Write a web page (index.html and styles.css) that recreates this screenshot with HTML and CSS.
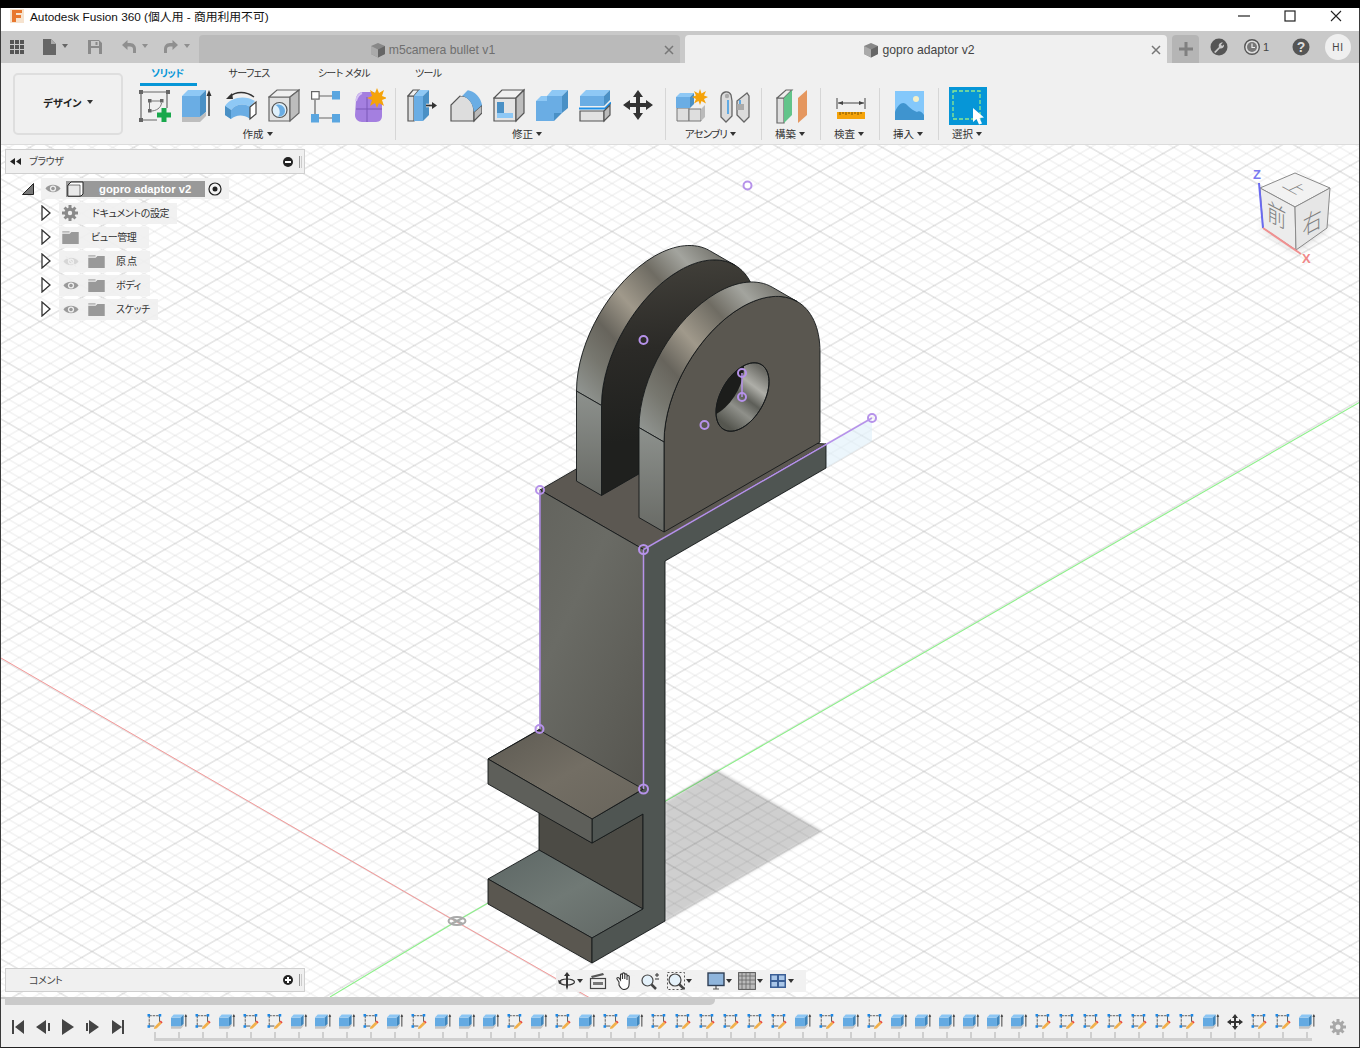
FILE: index.html
```html
<!DOCTYPE html>
<html lang="ja">
<head>
<meta charset="utf-8">
<title>Autodesk Fusion 360</title>
<link rel="stylesheet" href="styles.css">
</head>
<body>
<svg class="defs" width="0" height="0">
  <defs>
    <symbol id="s" viewBox="0 0 18 18">
      <g transform="translate(1.500 1) scale(.86)">
      <path d="M2 2H14M2 2V14" stroke="#555" stroke-width="1.100" stroke-dasharray="3 1" fill="none"/>
      <path d="M14 2V9M2 14H8" stroke="#555" stroke-width="1.100" fill="none"/>
      <rect x="0" y="0" width="3" height="3" fill="#1e88e5"/><rect x="13" y="0" width="3" height="3" fill="#1e88e5"/><rect x="0" y="13" width="3" height="3" fill="#1e88e5"/>
      <path d="M8 15L14 9L16.500 11L10.500 17L7.500 17.500Z" fill="#f2b04a"/>
      <path d="M14 9L15.500 7.500L17.500 9.500L16.500 11Z" fill="#e8483f"/>
      </g>
    </symbol>
    <symbol id="e" viewBox="0 0 18 18">
      <g transform="translate(1 1) scale(.9)">
      <path d="M0 4H11V14H0Z" fill="#64aae2"/><path d="M0 4L3 0.500H14L11 4Z" fill="#8cc6f4"/><path d="M11 4L14 0.500V11L11 14Z" fill="#3f86bd"/>
      <path d="M0 14H11L14 11V13L11 16.500H0Z" fill="#c4c4c4"/>
      <path d="M16.500 14V2" stroke="#333" stroke-width="1"/><path d="M16.500 0L15 3H18Z" fill="#333"/>
      </g>
    </symbol>
    <symbol id="m" viewBox="0 0 18 18">
      <path d="M9 1L12 5H10V8H13V6L17 9L13 12V10H10V13H12L9 17L6 13H8V10H5V12L1 9L5 6V8H8V5H6Z" fill="#333"/>
    </symbol>
    <symbol id="eye" viewBox="0 0 18 12">
      <path d="M0.500 6C4 0.500 14 0.500 17.500 6C14 11.500 4 11.500 0.500 6Z" fill="#999"/>
      <circle cx="9" cy="6" r="3.500" fill="#eee"/><circle cx="9" cy="6" r="2" fill="#999"/>
    </symbol>
    <symbol id="folder" viewBox="0 0 18 14">
      <path d="M0 0H8V2H0Z" fill="#bbb"/><path d="M10 1H18V14H0V3H8Z" fill="#999"/>
    </symbol>
    <symbol id="exp" viewBox="0 0 10 16">
      <path d="M1 1L9 8L1 15Z" fill="#fff" stroke="#333" stroke-width="1.300"/>
    </symbol>
    <symbol id="gcube" viewBox="0 0 16 16">
      <path d="M1 4L8 1L15 4V12L8 15.500L1 12Z" fill="#888"/><path d="M8 7.500L15 4V12L8 15.500Z" fill="#666"/><path d="M1 4L8 7.500V15.500L1 12Z" fill="#aaa"/>
    </symbol>
  </defs>
</svg>

<div class="app">
  <div class="blackbar"></div>

  <header class="titlebar">
    <svg class="ficon" viewBox="0 0 14 14"><rect width="14" height="14" fill="#f6e3cf"/><path d="M2 1H12V4H6V6H11V9H6V13H2Z" fill="#e8772e"/></svg>
    <span class="apptitle">Autodesk Fusion 360 (個人用 - 商用利用不可)</span>
    <div class="winbtns">
      <svg class="winbtn" viewBox="0 0 12 12"><path d="M0 6H12" stroke="#222" stroke-width="1.200"/></svg>
      <svg class="winbtn" viewBox="0 0 12 12"><rect x="1" y="1" width="10" height="10" fill="none" stroke="#222" stroke-width="1.200"/></svg>
      <svg class="winbtn" viewBox="0 0 12 12"><path d="M1 1L11 11M11 1L1 11" stroke="#222" stroke-width="1.100"/></svg>
    </div>
  </header>

  <div class="tabbar">
    <div class="quick">
      <svg class="q14" viewBox="0 0 14 14"><g fill="#555"><rect width="4" height="4"/><rect x="5" width="4" height="4"/><rect x="10" width="4" height="4"/><rect y="5" width="4" height="4"/><rect x="5" y="5" width="4" height="4"/><rect x="10" y="5" width="4" height="4"/><rect y="10" width="4" height="4"/><rect x="5" y="10" width="4" height="4"/><rect x="10" y="10" width="4" height="4"/></g></svg>
      <svg class="q26" viewBox="0 0 26 16"><path d="M0 0H8L13 5V16H0Z" fill="#666"/><path d="M8 0L13 5H8Z" fill="#aaa"/><path d="M19 5H25L22 9Z" fill="#666"/></svg>
      <svg class="q14" viewBox="0 0 14 14"><path d="M0 0H11L14 3V14H0ZM3 1V6H11V1ZM3 8V14H11V8Z" fill="#8a8a8a" fill-rule="evenodd"/><rect x="7.500" y="2" width="2" height="3" fill="#8a8a8a"/></svg>
      <svg class="q30" viewBox="0 0 30 16"><path d="M1 6L6.500 1V4H9C13 4 15 7 15 10V14H12V10C12 8.500 11 7.500 9 7.500H6.500V11Z" fill="#8f8f8f"/><path d="M21 5H27L24 9Z" fill="#8f8f8f"/></svg>
      <svg class="q30 redo" viewBox="0 0 30 16"><path d="M15 6L9.500 1V4H7C3 4 1 7 1 10V14H4V10C4 8.500 5 7.500 7 7.500H9.500V11Z" fill="#8f8f8f"/><path d="M21 5H27L24 9Z" fill="#8f8f8f"/></svg>
    </div>
    <div class="doctab inactive">
      <svg class="tabcube" viewBox="0 0 16 16"><use href="#gcube"/></svg>
      <span class="tabname">m5camera bullet v1</span>
      <svg class="tabx" viewBox="0 0 10 10"><path d="M1 1L9 9M9 1L1 9" stroke="currentColor" stroke-width="1.500"/></svg>
    </div>
    <div class="doctab active">
      <svg class="tabcube" viewBox="0 0 16 16"><use href="#gcube"/></svg>
      <span class="tabname">gopro adaptor v2</span>
      <svg class="tabx" viewBox="0 0 10 10"><path d="M1 1L9 9M9 1L1 9" stroke="currentColor" stroke-width="1.500"/></svg>
    </div>
    <div class="plus"><svg viewBox="0 0 14 14" class="plusic"><path d="M5.500 0H8.500V5.500H14V8.500H8.500V14H5.500V8.500H0V5.500H5.500Z" fill="#808080"/></svg></div>
    <div class="rightic">
      <svg class="ic18" viewBox="0 0 18 18"><circle cx="9" cy="9" r="8.500" fill="#555"/><path d="M4 14L9 9C8 6.500 10 4 13 4.500L11 6.500L12 8L14 6.500C14.500 9.500 12 11 9.800 10.500L5.500 15Z" fill="#c9c9c9"/></svg>
      <div class="clock"><svg class="ic16" viewBox="0 0 16 16"><circle cx="8" cy="8" r="7.300" fill="#ddd" stroke="#555" stroke-width="1.400"/><circle cx="8" cy="8" r="5" fill="#777"/><path d="M8 4.500V8.500H11" stroke="#eee" stroke-width="1.200" fill="none"/></svg><span class="cnt">1</span></div>
      <svg class="ic18 help" viewBox="0 0 18 18"><circle cx="9" cy="9" r="8.500" fill="#555"/><text x="9" y="14" text-anchor="middle" class="helpq">?</text></svg>
      <div class="user">HI</div>
    </div>
  </div>

  <div class="ribbon">
    <div class="designcol"><button class="design">デザイン<i class="car"></i></button></div>
    <div class="toolcol">
      <nav class="rtabs">
        <span class="rtab on">ソリッド</span>
        <span class="rtab t2">サーフェス</span>
        <span class="rtab t3">シート メタル</span>
        <span class="rtab t4">ツール</span>
      </nav>
      <div class="groups">
        <section class="grp g1">
          <div class="tools">
            <svg class="tool" viewBox="0 0 32 36"><path d="M2 4H28M2 4V32H18M28 4V20" stroke="#666" stroke-width="1.200" fill="none"/><g fill="#666"><rect y="2" width="4" height="4"/><rect x="27" y="2" width="4" height="4"/><rect y="30" width="4" height="4"/><rect x="9" y="11" width="3.500" height="3.500"/><rect x="21" y="11" width="3.500" height="3.500"/><rect x="9" y="21" width="3.500" height="3.500"/></g><path d="M12 13H21M10.500 14V21M22.500 15C22 20 17 23 12 23" stroke="#777" fill="none"/><path d="M22.500 20h5v4.500h4.500v5h-4.500v4.500h-5v-4.500h-4.500v-5h4.500z" fill="#19a84c"/></svg>
            <svg class="tool" viewBox="0 0 32 36"><path d="M0 8H18V29H0Z" fill="#6aade4"/><path d="M0 8L6 2H24L18 8Z" fill="#8ec8f5"/><path d="M18 8L24 2V24L18 29Z" fill="#4a90c5"/><path d="M0 29H18L24 24V28L18 34H0Z" fill="#bdbdbd"/><path d="M27 28V5" stroke="#333" stroke-width="1.400"/><path d="M27 2L24.500 8H29.500Z" fill="#333"/></svg>
            <svg class="tool" viewBox="0 0 32 36"><path d="M0 18C6 9 20 7 30 13L25 19C19 15 11 16 6 22Z" fill="#8ec8f5"/><path d="M0 18L6 22C11 16 19 15 25 19V31C18 26 11 27 6 31L0 27Z" fill="#6aade4"/><path d="M0 18L6 22V31L0 27Z" fill="#4a90c5"/><path d="M25 19L31 14V26L25 31Z" fill="#fff" stroke="#444" stroke-width="1.200"/><path d="M4 9C11 3 21 3 29 9" stroke="#333" stroke-width="1.400" fill="none"/><path d="M1 11L7 5L8 11Z" fill="#333"/></svg>
            <svg class="tool" viewBox="0 0 32 36"><path d="M1 9H22V33H1Z" fill="#e2e2e2" stroke="#666" stroke-width="1.200"/><path d="M1 9L9 2H31L22 9Z" fill="#f0f0f0" stroke="#666" stroke-width="1.200"/><path d="M22 9L31 2V25L22 33Z" fill="#bdbdbd" stroke="#666" stroke-width="1.200"/><circle cx="11.500" cy="22" r="7.500" fill="#dff0fb" stroke="#555" stroke-width="1.200"/><path d="M7.500 17C10 15.500 17 17 17 23C17 27 13 29 10 28.500C13 26 12 19 7.500 17Z" fill="#6aade4"/></svg>
            <svg class="tool" viewBox="0 0 32 36"><path d="M8 8H22M4 12V26M8 30H22" stroke="#666" stroke-width="1.200"/><rect x="0.600" y="3.600" width="7.500" height="7.500" fill="#fff" stroke="#666" stroke-width="1.200"/><rect x="21" y="3" width="8" height="8.500" fill="#5aa6e0"/><rect x="0" y="26" width="8" height="8.500" fill="#5aa6e0"/><rect x="21" y="26" width="8" height="8.500" fill="#5aa6e0"/></svg>
            <svg class="tool" viewBox="0 0 32 36"><path d="M2 12C2 8 4 4 9 4H20L28 14V28C28 31 26 34 22 34H8C4 34 1 31 1 27Z" fill="#a47fe0"/><path d="M2 21H28M13 9V34" stroke="#7a58b8" stroke-width="1"/><path d="M2 13C3 9 5 6 8 5" stroke="#d6c3f3" stroke-width="2" fill="none"/><path d="M23 0L25 5L30 2L28 8L33 10L28 12L30 18L25 15L23 20L21 15L16 18L18 12L13 10L18 8L16 2L21 5Z" fill="#f5a30a"/></svg>
          </div>
          <div class="glabel">作成<i class="car"></i></div>
        </section>
        <section class="grp g2">
          <div class="tools">
            <svg class="tool" viewBox="0 0 32 36"><path d="M7 8H1V33H7Z" fill="#ddd" stroke="#555" stroke-width="1.200"/><path d="M1 8L6 2H12L7 8Z" fill="#eee" stroke="#555" stroke-width="1.200"/><path d="M7 8H16V33H7Z" fill="#6aade4"/><path d="M7 8L12 2H22L16 8Z" fill="#8ec8f5"/><path d="M16 8L22 2V27L16 33Z" fill="#4a90c5"/><path d="M19 17.500H26" stroke="#fff" stroke-width="3.500"/><path d="M19 17.500H26" stroke="#333" stroke-width="1.800"/><path d="M30 17.500L25 14V21Z" fill="#333"/></svg>
            <svg class="tool" viewBox="0 0 32 36"><path d="M1 33V17L10 8H12C20 9 24 16 24 24V33Z" fill="#ddd" stroke="#555" stroke-width="1.200"/><path d="M24 24L32 17V25L24 33Z" fill="#bbb" stroke="#555" stroke-width="1.200"/><path d="M12 8L17 2C25 3 31 10 32 17L24 24C23 15 18 9 12 8Z" fill="#6aade4"/><path d="M10 8L16 2H18L12 8Z" fill="#eee"/></svg>
            <svg class="tool" viewBox="0 0 32 36"><path d="M1 10H23V33H1Z" fill="#e4e4e4" stroke="#555" stroke-width="1.200"/><path d="M1 10L9 2H31L23 10Z" fill="#f0f0f0" stroke="#555" stroke-width="1.200"/><path d="M23 10L31 2V25L23 33Z" fill="#bdbdbd" stroke="#555" stroke-width="1.200"/><path d="M4 14H11V25H4Z" fill="#4a90c5"/><path d="M11 25H20V30H4L4 25Z" fill="#8ec8f5"/></svg>
            <svg class="tool" viewBox="0 0 32 36"><path d="M0 13H18V33H0Z" fill="#6aade4"/><path d="M0 13L5 8H23L18 13Z" fill="#8ec8f5"/><path d="M11 8H26V25H18V13H11Z" fill="#6aade4"/><path d="M11 8L16 2H32L26 8Z" fill="#8ec8f5"/><path d="M26 8L32 2V20L26 25Z" fill="#4a90c5"/><path d="M18 25H26L18 33Z" fill="#4a90c5"/></svg>
            <svg class="tool" viewBox="0 0 32 36"><path d="M1 8H25V18H1Z" fill="#6aade4"/><path d="M1 8L7 2H31L25 8Z" fill="#8ec8f5"/><path d="M25 8L31 2V12L25 18Z" fill="#4a90c5"/><path d="M0 20.500H26L32 14.500" stroke="#1e8fe6" stroke-width="1.800" fill="none"/><path d="M1 23H25V33H1Z" fill="#e2e2e2" stroke="#555" stroke-width="1.200"/><path d="M25 23L31 17V27L25 33Z" fill="#bbb" stroke="#555" stroke-width="1.200"/></svg>
            <svg class="tool" viewBox="0 0 32 36"><path d="M16 2L21 9H18V15H24V12L31 17L24 22V19H18V25H21L16 32L11 25H14V19H8V22L1 17L8 12V15H14V9H11Z" fill="#333"/></svg>
          </div>
          <div class="glabel">修正<i class="car"></i></div>
        </section>
        <section class="grp g3">
          <div class="tools">
            <svg class="tool" viewBox="0 0 32 36"><path d="M1 20H13V33H1Z" fill="#dedede" stroke="#777"/><path d="M13 21H25V33H13Z" fill="#dedede" stroke="#777"/><path d="M25 21L29 17V29L25 33Z" fill="#bbb"/><path d="M0 9H14V20H0Z" fill="#6aade4"/><path d="M0 9L4 5H18L14 9Z" fill="#8ec8f5"/><path d="M14 9L18 5V16L14 20Z" fill="#4a90c5"/><path d="M24 1L25.500 5.500L30 3L28 7.500L32 9L28 11L30 15.500L25.500 13L24 17L22.500 13L18 15.500L20 11L16 9L20 7.500L18 3L22.500 5.500Z" fill="#f5a30a"/></svg>
            <svg class="tool" viewBox="0 0 32 36"><path d="M2 10C2 3 10 2 12 7L13 13V28L7 34L2 29Z" fill="#dcdcdc" stroke="#666" stroke-width="1.300"/><path d="M28 5L18 13V27L25 34L30 29V8Z" fill="#dcdcdc" stroke="#666" stroke-width="1.300"/><path d="M9 12V26M21 12V22" stroke="#1e8fe6" stroke-width="1.300"/><path d="M18 16H25V22H18Z" fill="#aaa"/><circle cx="8" cy="8" r="2.200" fill="#aaa"/></svg>
          </div>
          <div class="glabel">アセンブリ<i class="car"></i></div>
        </section>
        <section class="grp g4">
          <div class="tools">
            <svg class="tool" viewBox="0 0 32 36"><path d="M1 10H8V35H1Z" fill="#dedede" stroke="#666" stroke-width="1.200"/><path d="M1 10L10 2H16L8 10Z" fill="#eee" stroke="#666" stroke-width="1.200"/><path d="M8 10L16 2V27L8 35Z" fill="#62c48a"/><path d="M22 10L31 2V27L22 35Z" fill="#e5975f"/></svg>
          </div>
          <div class="glabel">構築<i class="car"></i></div>
        </section>
        <section class="grp g4">
          <div class="tools">
            <svg class="tool" viewBox="0 0 32 36"><path d="M3 15H29" stroke="#444"/><path d="M2 10V21M30 10V21" stroke="#444"/><path d="M3 15L8 13V17ZM29 15L24 13V17Z" fill="#444"/><path d="M2 24H30V31H2Z" fill="#f5a30a"/><path d="M5 24V27M8 24V26M11 24V27M14 24V26M17 24V27M20 24V26M23 24V27M26 24V26" stroke="#7a5200"/></svg>
          </div>
          <div class="glabel">検査<i class="car"></i></div>
        </section>
        <section class="grp g4">
          <div class="tools">
            <svg class="tool" viewBox="0 0 32 36"><rect x="1" y="3" width="29" height="29" fill="#84c8fb"/><path d="M1 24C5 14 10 13 14 18C17 21 20 23 23 24C25 22 28 24 30 27V32H1Z" fill="#3f94cf"/><circle cx="22" cy="11" r="3" fill="#f4f0c8"/></svg>
          </div>
          <div class="glabel">挿入<i class="car"></i></div>
        </section>
        <section class="grp g7">
          <div class="selectbox">
            <svg class="selic" viewBox="0 0 38 38"><rect width="38" height="38" fill="#0696d7"/><rect x="4" y="4" width="27" height="28" fill="none" stroke="#8fe88f" stroke-width="1.300" stroke-dasharray="4 2"/><path d="M24 21L24 35L27.500 32L30 37.500L33 36.500L30.500 31L35 30.500Z" fill="#fff"/></svg>
          </div>
          <div class="glabel">選択<i class="car"></i></div>
        </section>
      </div>
    </div>
  </div>

  <main class="canvas">
    <svg class="scene" width="1358" height="852" viewBox="1 145 1358 852">
      <defs>
        <pattern id="grid" patternUnits="userSpaceOnUse" x="456" y="921.500" width="104" height="60">
          <path d="M0 12L104 72M0 24L104 84M0 36L104 96M0 48L104 108M0 -48L104 12M0 -36L104 24M0 -24L104 36M0 -12L104 48M0 12L104 -48M0 24L104 -36M0 36L104 -24M0 48L104 -12M0 72L104 12M0 84L104 24M0 96L104 36M0 108L104 48" stroke="#e8e8e8" stroke-width="1" fill="none"/>
          <path d="M0 0L104 60M0 60L104 0" stroke="#cfcfcf" stroke-width="1" fill="none"/>
        </pattern>
        <linearGradient id="rimF" gradientUnits="userSpaceOnUse" x1="640" y1="425" x2="790" y2="290">
          <stop offset="0" stop-color="#8f938f"/><stop offset=".16" stop-color="#77776f"/><stop offset=".3" stop-color="#67645c"/><stop offset=".47" stop-color="#a0998b"/><stop offset=".66" stop-color="#6f6c63"/><stop offset=".82" stop-color="#a3a49e"/><stop offset="1" stop-color="#6d6c65"/>
        </linearGradient>
        <linearGradient id="sideL" x1="0" y1="0" x2="0" y2="1">
          <stop offset="0" stop-color="#8d918d"/><stop offset="1" stop-color="#686a65"/>
        </linearGradient>
        <linearGradient id="backface" gradientUnits="userSpaceOnUse" x1="650" y1="300" x2="670" y2="480">
          <stop offset="0" stop-color="#43413b"/><stop offset=".5" stop-color="#2b2a27"/><stop offset="1" stop-color="#1f201e"/>
        </linearGradient>
        <linearGradient id="col" x1="0" y1="0" x2="1" y2="1">
          <stop offset="0" stop-color="#5f5f59"/><stop offset=".45" stop-color="#6a6b65"/><stop offset="1" stop-color="#54534d"/>
        </linearGradient>
        <linearGradient id="shelf" x1="0" y1="0" x2="1" y2="1">
          <stop offset="0" stop-color="#5d5a52"/><stop offset=".5" stop-color="#736e64"/><stop offset="1" stop-color="#68645b"/>
        </linearGradient>
        <linearGradient id="foot" x1="0" y1="0" x2="1" y2="1">
          <stop offset="0" stop-color="#5c6664"/><stop offset=".5" stop-color="#707975"/><stop offset="1" stop-color="#606663"/>
        </linearGradient>
        <linearGradient id="holeg" gradientUnits="userSpaceOnUse" x1="726" y1="425" x2="766" y2="372">
          <stop offset="0" stop-color="#55564f"/><stop offset=".3" stop-color="#8f908a"/><stop offset=".5" stop-color="#5d5e58"/><stop offset=".72" stop-color="#aeaea8"/><stop offset="1" stop-color="#6a6a64"/>
        </linearGradient>
        <clipPath id="holeclip"><path d="M769 381.700C769 364.800 757.100 357.950 742.500 366.400C727.900 374.850 716 395.400 716 412.300C716 429.200 727.900 436.050 742.500 427.600C757.100 419.150 769 398.600 769 381.700Z"/></clipPath>
        <filter id="soft" x="-10%" y="-10%" width="120%" height="120%"><feGaussianBlur stdDeviation="1.500"/></filter>
        <filter id="softcube" x="-30%" y="-30%" width="160%" height="160%"><feGaussianBlur stdDeviation="4"/></filter>
      </defs>
      <rect x="1" y="145" width="1358" height="852" fill="#fff"/>
      <rect x="1" y="145" width="1358" height="852" fill="url(#grid)"/>

      <path d="M1 658L456 921.500L590 998" stroke="#f59a9a" stroke-width="1" fill="none"/>
      <path d="M330 997L456 921.500L1360 402" stroke="#8df08a" stroke-width="1.100" fill="none"/>
      <path d="M665 802L717 770L822 831L665 921Z" fill="#000" fill-opacity=".19" filter="url(#soft)"/>

      <g stroke="#aaa" stroke-width="2" fill="none"><ellipse cx="457" cy="921" rx="8.500" ry="4"/><path d="M451 918L463 924M463 918L451 924"/></g>

      <path d="M826 444L872 418V441L826 468Z" fill="#dceefa" fill-opacity=".55"/>

      <g stroke="#15191a" stroke-width=".9" stroke-linejoin="round">
        <!-- top plate -->
        <path d="M540 490L640 432L826 444L643.500 549.500Z" fill="#5c5852"/>
        <!-- back lug -->
        <g transform="translate(-62.500 -36.500)">
          <path d="M664 532V442C664 392.300 698.900 331.900 742 307C785.100 282.100 820 302.300 820 352V442Z" fill="url(#backface)"/>
          <path d="M639 427.600C639 377.900 673.900 317.500 717 292.600C737.700 280.700 757.500 278.700 772.150 287.140L797.150 301.540C782.500 293.100 762.700 295.100 742 307C698.900 331.900 664 392.300 664 442Z" fill="url(#rimF)"/>
          <path d="M639 427.600L664 442V532L639 517.600Z" fill="url(#sideL)"/>
        </g>
        <!-- front lug -->
        <path d="M664 532V442C664 392.300 698.900 331.900 742 307C785.100 282.100 820 302.300 820 352V442Z" fill="#5a5750"/>
        <path d="M639 427.600C639 377.900 673.900 317.500 717 292.600C737.700 280.700 757.500 278.700 772.150 287.140L797.150 301.540C782.500 293.100 762.700 295.100 742 307C698.900 331.900 664 392.300 664 442Z" fill="url(#rimF)"/>
        <path d="M639 427.600L664 442V532L639 517.600Z" fill="url(#sideL)"/>
        <!-- hole -->
        <path d="M769 381.700C769 364.800 757.100 357.950 742.500 366.400C727.900 374.850 716 395.400 716 412.300C716 429.200 727.900 436.050 742.500 427.600C757.100 419.150 769 398.600 769 381.700Z" fill="url(#holeg)"/>
        <g clip-path="url(#holeclip)">
          <path d="M744 367.300C744 350.400 732.100 343.550 717.500 352C702.900 360.450 691 381 691 397.900C691 414.800 702.900 421.650 717.500 413.200C732.100 404.750 744 384.200 744 367.300Z" fill="#1c1d1b" stroke="none"/>
        </g>
        <path d="M769 381.700C769 364.800 757.100 357.950 742.500 366.400C727.900 374.850 716 395.400 716 412.300C716 429.200 727.900 436.050 742.500 427.600C757.100 419.150 769 398.600 769 381.700Z" fill="none"/>
        <!-- column -->
        <path d="M540 490L643.500 549.500V789L592 819L488 759L540 729Z" fill="url(#col)"/>
        <path d="M539 812L592 843L643 814V909L539 850Z" fill="#4c4b45"/>
        <!-- foot -->
        <path d="M539 850L643 909L592 938L488 879Z" fill="url(#foot)"/>
        <path d="M488 879L592 938V963L488 904Z" fill="#5a5750"/>
        <!-- right faces -->
        <path d="M643.500 549.500L826 444V468L665 561V921L592 963V938L643 909V814L592 843V819L643.500 789Z" fill="#4f5552"/>
        <!-- shelf -->
        <path d="M539 730L643 789L592 819L488 759Z" fill="url(#shelf)"/>
        <path d="M488 759L592 819V843L488 784Z" fill="#5e5f5a"/>
      </g>

      <g stroke="#b692ea" fill="none" stroke-width="1.500">
        <path d="M540 490V729M643.500 549.500V789M643.500 549.500L872 418M742 373V397"/>
        <g stroke-width="2">
          <circle cx="747.500" cy="185.500" r="4"/><circle cx="643.500" cy="340" r="4"/><circle cx="704.500" cy="425" r="4"/><circle cx="742" cy="373" r="4"/><circle cx="742" cy="397" r="4"/><circle cx="872" cy="418" r="4"/><circle cx="540" cy="490" r="4"/><circle cx="643.500" cy="549.500" r="4.500"/><circle cx="539.500" cy="729" r="4"/><circle cx="643.500" cy="789" r="4.500"/>
        </g>
      </g>

      <!-- view cube -->
      <path d="M1263 228L1296 250L1327 228L1320 215H1270Z" fill="#000" fill-opacity=".22" filter="url(#softcube)"/>
      <g stroke="#8a8a8a" stroke-width="1" stroke-linejoin="round">
        <path d="M1260 188L1295 173L1330 188L1295 207Z" fill="#f2f2f2"/>
        <path d="M1260 188L1295 207L1296 250L1263 228Z" fill="#ececec"/>
        <path d="M1295 207L1330 188L1327 228L1296 250Z" fill="#e6e6e6"/>
      </g>
      <text class="cubet" transform="matrix(.8 .44 -.8 .38 1281.400 186.300)" font-size="20">上</text>
      <text class="cubet" transform="matrix(.88 .46 0 1.100 1267 219)" font-size="22">前</text>
      <text class="cubet" transform="matrix(.88 -.46 0 1.100 1302.500 236)" font-size="22">右</text>
      <path d="M1259 183L1263 228" stroke="#6a6af0" stroke-width="2"/>
      <path d="M1263 228L1301 254" stroke="#f09090" stroke-width="2"/>
      <text class="axis zaxis" x="1253" y="179">Z</text>
      <text class="axis xaxis" x="1302" y="263">X</text>
    </svg>

    <div class="panel browser">
      <svg class="rew" viewBox="0 0 11 7"><path d="M0 3.500L5 0V7ZM6 3.500L11 0V7Z" fill="#222"/></svg><span class="ptitle">ブラウザ</span>
      <span class="pm"><svg class="pmic" viewBox="0 0 10 10"><circle cx="5" cy="5" r="5" fill="#222"/><path d="M2 4H8V6H2Z" fill="#fff"/></svg></span><span class="grip"></span>
    </div>

    <div class="tree">
      <div class="row root">
        <svg class="corner" viewBox="0 0 12 12"><path d="M0.500 11.500L11.500 0.500V11.500Z" fill="#777" stroke="#222"/></svg>
        <div class="rootlab">
          <svg class="eye" viewBox="0 0 18 12"><use href="#eye"/></svg>
          <div class="rootname"><svg class="rootic" viewBox="0 0 18 16"><path d="M1 4L4 1H16V13L14 15H1Z" fill="#fff" stroke="#222"/><path d="M1 4H13V15H1Z" fill="#e9e9e9" stroke="#222" stroke-width=".6"/></svg><span class="rname">gopro adaptor v2</span></div>
          <svg class="radio" viewBox="0 0 14 14"><circle cx="7" cy="7" r="6" fill="#f4f4f4" stroke="#222" stroke-width="1.200"/><circle cx="7" cy="7" r="2.500" fill="#222"/></svg>
        </div>
      </div>
      <div class="row"><svg class="exp" viewBox="0 0 10 16"><use href="#exp"/></svg>
        <div class="lab w118"><svg class="gear" viewBox="0 0 16 16"><g fill="#8a8a8a"><circle cx="8" cy="8" r="5.500"/><path d="M6.500 0H9.500V3H6.500ZM6.500 13H9.500V16H6.500ZM0 6.500H3V9.500H0ZM13 6.500H16V9.500H13Z"/><path d="M1.500 3.600L3.600 1.500L5.500 3.500L3.500 5.500ZM10.500 12.500L12.500 10.500L14.500 12.400L12.400 14.500ZM12.400 1.500L14.500 3.600L12.500 5.500L10.500 3.500ZM3.500 10.500L5.500 12.500L3.600 14.500L1.500 12.400Z"/></g><circle cx="8" cy="8" r="2.200" fill="#efefef"/></svg><span class="ltxt doc">ドキュメントの設定</span></div></div>
      <div class="row"><svg class="exp" viewBox="0 0 10 16"><use href="#exp"/></svg>
        <div class="lab w90"><svg class="fold first" viewBox="0 0 18 14"><use href="#folder"/></svg><span class="ltxt view">ビュー管理</span></div></div>
      <div class="row"><svg class="exp" viewBox="0 0 10 16"><use href="#exp"/></svg>
        <div class="lab w91"><svg class="eye off" viewBox="0 0 18 12"><use href="#eye"/><path d="M3 0L15 12" stroke="#e4e4e4" stroke-width="1.500"/></svg><svg class="fold" viewBox="0 0 18 14"><use href="#folder"/></svg><span class="ltxt gen">原点</span></div></div>
      <div class="row"><svg class="exp" viewBox="0 0 10 16"><use href="#exp"/></svg>
        <div class="lab w91"><svg class="eye" viewBox="0 0 18 12"><use href="#eye"/></svg><svg class="fold" viewBox="0 0 18 14"><use href="#folder"/></svg><span class="ltxt bod">ボディ</span></div></div>
      <div class="row"><svg class="exp" viewBox="0 0 10 16"><use href="#exp"/></svg>
        <div class="lab w99"><svg class="eye" viewBox="0 0 18 12"><use href="#eye"/></svg><svg class="fold" viewBox="0 0 18 14"><use href="#folder"/></svg><span class="ltxt bod">スケッチ</span></div></div>
    </div>

    <div class="panel comments">
      <span class="ptitle noarrow">コメント</span>
      <span class="pm"><svg class="pmic" viewBox="0 0 10 10"><circle cx="5" cy="5" r="5" fill="#222"/><path d="M2 4H4V2H6V4H8V6H6V8H4V6H2Z" fill="#fff"/></svg></span><span class="grip"></span>
    </div>

    <div class="navbar">
      <svg class="nav" viewBox="0 0 18 18"><path d="M9 0L12 4H10V15L9 18L8 15V4H6Z" fill="#333"/><ellipse cx="9" cy="10" rx="7.500" ry="3" fill="none" stroke="#333" stroke-width="1.200"/><path d="M1 12L0 8L4 10Z" fill="#333"/></svg><i class="car navcar"></i>
      <svg class="nav" viewBox="0 0 18 18"><path d="M2 4L14 1L15 3L3 6Z" fill="#555"/><rect x="1.500" y="6.500" width="15" height="10" fill="#eee" stroke="#444" stroke-width="1.200"/><rect x="4" y="10" width="10" height="3" fill="#777"/></svg>
      <svg class="nav" viewBox="0 0 18 18"><path d="M4 10L2 7C1.500 6 3 5 4 6L5.500 8V3C5.500 1.500 7.500 1.500 7.500 3V7V1.800C7.500 .5 9.800 .5 9.800 1.800V7V2.800C9.800 1.500 12 1.500 12 2.800V8V4.500C12 3.200 14.200 3.200 14.200 4.500V11C14.200 15 12 17.500 9 17.500C6.500 17.500 5.500 16 4 13Z" fill="#fff" stroke="#333" stroke-width="1.100"/></svg>
      <svg class="nav" viewBox="0 0 18 18"><circle cx="6.500" cy="8.500" r="5.500" fill="#e4f1fa" stroke="#444" stroke-width="1.200"/><path d="M10.500 12.500L15 17" stroke="#444" stroke-width="2.500"/><path d="M14 3H18M16 1V5M14 7H18" stroke="#333"/></svg>
      <svg class="nav" viewBox="0 0 18 18"><rect x=".5" y=".5" width="17" height="17" fill="none" stroke="#555" stroke-dasharray="2 2"/><circle cx="8" cy="8" r="6" fill="#e4f1fa" stroke="#444" stroke-width="1.200"/><path d="M12 12L17 17" stroke="#444" stroke-width="2.500"/></svg><i class="car navcar"></i>
      <svg class="nav gapl" viewBox="0 0 18 18"><rect x="1" y="1" width="16" height="12.500" fill="#8fb5dc" stroke="#2f3f55" stroke-width="1.400"/><path d="M6 17H12M9 14V17" stroke="#555" stroke-width="1.200"/></svg><i class="car navcar"></i>
      <svg class="nav" viewBox="0 0 18 18"><rect x=".6" y=".6" width="16.800" height="16.800" fill="#bbb" stroke="#555" stroke-width="1"/><path d="M4 0V18M8 0V18M12 0V18M0 4H18M0 8H18M0 12H18" stroke="#666" stroke-width=".8"/></svg><i class="car navcar"></i>
      <svg class="nav" viewBox="0 0 18 18"><rect x="1" y="2" width="16" height="14" fill="#3b5f96"/><rect x="2.500" y="3.500" width="5.500" height="4.500" fill="#a9c6e8"/><rect x="10" y="3.500" width="5.500" height="4.500" fill="#a9c6e8"/><rect x="2.500" y="10" width="5.500" height="4.500" fill="#a9c6e8"/><rect x="10" y="10" width="5.500" height="4.500" fill="#a9c6e8"/></svg><i class="car navcar"></i>
    </div>
  </main>

  <footer class="timeline">
    <div class="tlscroll"><div class="tlthumb"></div></div>
    <div class="tlmain">
      <svg class="player" viewBox="0 0 116 18"><g fill="#444"><path d="M2 2H4V16H2ZM14 2V16L5 9Z"/><path d="M36 2V16L26 9ZM38 5H40V13H38Z"/><path d="M52 1V17L64 9Z"/><path d="M76 5H78V13H76ZM79 2V16L89 9Z"/><path d="M102 2V16L112 9ZM112 2H114V16H112Z"/></g></svg>
      <div class="tltrack">
        <ul class="items">
          <li><svg><use href="#s"/></svg></li><li><svg><use href="#e"/></svg></li><li><svg><use href="#s"/></svg></li><li><svg><use href="#e"/></svg></li><li><svg><use href="#s"/></svg></li><li><svg><use href="#s"/></svg></li><li><svg><use href="#e"/></svg></li><li><svg><use href="#e"/></svg></li><li><svg><use href="#e"/></svg></li><li><svg><use href="#s"/></svg></li><li><svg><use href="#e"/></svg></li><li><svg><use href="#s"/></svg></li><li><svg><use href="#e"/></svg></li><li><svg><use href="#e"/></svg></li><li><svg><use href="#e"/></svg></li><li><svg><use href="#s"/></svg></li><li><svg><use href="#e"/></svg></li><li><svg><use href="#s"/></svg></li><li><svg><use href="#e"/></svg></li><li><svg><use href="#s"/></svg></li><li><svg><use href="#e"/></svg></li><li><svg><use href="#s"/></svg></li>
          <li><svg><use href="#s"/></svg></li><li><svg><use href="#s"/></svg></li><li><svg><use href="#s"/></svg></li><li><svg><use href="#s"/></svg></li><li><svg><use href="#s"/></svg></li><li><svg><use href="#e"/></svg></li><li><svg><use href="#s"/></svg></li><li><svg><use href="#e"/></svg></li><li><svg><use href="#s"/></svg></li><li><svg><use href="#e"/></svg></li><li><svg><use href="#e"/></svg></li><li><svg><use href="#e"/></svg></li><li><svg><use href="#e"/></svg></li><li><svg><use href="#e"/></svg></li><li><svg><use href="#e"/></svg></li><li><svg><use href="#s"/></svg></li><li><svg><use href="#s"/></svg></li><li><svg><use href="#s"/></svg></li><li><svg><use href="#s"/></svg></li><li><svg><use href="#s"/></svg></li><li><svg><use href="#s"/></svg></li><li><svg><use href="#s"/></svg></li><li><svg><use href="#e"/></svg></li><li><svg><use href="#m"/></svg></li><li><svg><use href="#s"/></svg></li><li><svg><use href="#s"/></svg></li><li><svg><use href="#e"/></svg></li>
        </ul>
        <div class="rail"></div>
      </div>
      <svg class="tlgear" viewBox="0 0 16 16"><g fill="#a8a8a8"><circle cx="8" cy="8" r="5.500"/><path d="M6.500 0H9.500V3H6.500ZM6.500 13H9.500V16H6.500ZM0 6.500H3V9.500H0ZM13 6.500H16V9.500H13Z"/><path d="M1.500 3.600L3.600 1.500L5.500 3.500L3.500 5.500ZM10.500 12.500L12.500 10.500L14.500 12.400L12.400 14.500ZM12.400 1.500L14.500 3.600L12.500 5.500L10.500 3.500ZM3.500 10.500L5.500 12.500L3.600 14.500L1.500 12.400Z"/></g><circle cx="8" cy="8" r="2.500" fill="#f0f0f0"/></svg>
    </div>
  </footer>
</div>
</body>
</html>
```

FILE: styles.css
```css
* { box-sizing: border-box; }
html, body { margin: 0; padding: 0; height: 100%; overflow: hidden; background: #fff; }
body { font-family: "Liberation Sans", "Noto Sans CJK JP", sans-serif; font-size: 10.5px; color: #333; font-feature-settings: "palt"; }
.defs { position: absolute; }
.app { width: 1360px; height: 1048px; display: flex; flex-direction: column; border-left: 1px solid #3a3a3a; border-right: 1px solid #3a3a3a; border-bottom: 1px solid #222; }
.blackbar { height: 8px; background: #000; margin: 0 -1px; flex: none; }

.titlebar { height: 23px; flex: none; background: #fff; display: flex; align-items: center; padding: 0 0 8px 9px; }
.ficon { width: 14px; height: 14px; }
.apptitle { font-size: 11.800px; color: #111; margin-left: 6px; font-feature-settings: normal; }
.winbtns { margin-left: auto; display: flex; align-items: center; padding-right: 17px; gap: 34px; }
.winbtn { width: 12px; height: 12px; }

.tabbar { height: 32px; flex: none; background: #c9c9c9; display: flex; align-items: flex-end; }
.quick { width: 198px; height: 32px; display: flex; align-items: center; gap: 19px; padding-left: 9px; flex: none; }
.q14 { width: 14px; height: 14px; }
.q26 { width: 26px; height: 16px; }
.q30 { width: 30px; height: 16px; }
.redo { margin-left: -7px; }
.doctab { position: relative; height: 28px; display: flex; align-items: center; justify-content: center; gap: 3px; padding: 1px 14px 0 0; border-radius: 4px 4px 0 0; font-size: 12.200px; }
.inactive { width: 481px; background: #bababa; color: #6f6f6f; }
.active { width: 482px; margin-left: 5px; background: #f0f0f0; color: #444; }
.tabcube { width: 16px; height: 16px; }
.tabx { position: absolute; right: 6px; top: 10px; width: 10px; height: 10px; color: #777; }
.plus { width: 27px; height: 28px; margin-left: 5px; background: #b5b5b5; border-radius: 4px 4px 0 0; display: flex; align-items: center; justify-content: center; }
.plusic { width: 14px; height: 14px; }
.rightic { height: 32px; flex: 1; display: flex; align-items: center; padding-left: 11px; }
.ic18 { width: 18px; height: 18px; flex: none; }
.ic16 { width: 16px; height: 16px; flex: none; }
.clock { display: flex; align-items: center; margin-left: 16px; gap: 3px; }
.cnt { font-size: 11px; color: #444; }
.help { margin-left: 23px; }
.helpq { font-size: 14px; font-weight: bold; fill: #ddd; font-family: "Liberation Sans", sans-serif; }
.user { margin-left: 15px; width: 26px; height: 26px; border-radius: 50%; background: #efefef; color: #444; font-size: 10px; display: flex; align-items: center; justify-content: center; letter-spacing: 1px; }

.ribbon { height: 82px; flex: none; background: #f0f0f0; display: flex; border-bottom: 1px solid #dcdcdc; }
.designcol { width: 132px; flex: none; padding: 10px 0 0 12px; }
.design { width: 110px; height: 62px; border: 2px solid #dedede; border-radius: 5px; background: #f0f0f0; font: bold 10.200px "Liberation Sans", "Noto Sans CJK JP", sans-serif; font-feature-settings: "palt"; color: #222; display: flex; align-items: center; justify-content: center; gap: 5px; padding: 0 0 4px; }
.car { display: inline-block; width: 0; height: 0; border-left: 3px solid transparent; border-right: 3px solid transparent; border-top: 4px solid #333; }
.toolcol { flex: 1; display: flex; flex-direction: column; }
.rtabs { height: 25px; display: flex; align-items: flex-start; padding: 4px 0 0 18px; }
.rtab { font-size: 10px; color: #333; height: 20px; line-height: 13px; letter-spacing: -.6px; }
.rtab.on { color: #0696d7; font-weight: bold; position: relative; }
.rtab.on::after { content: ""; position: absolute; left: -11px; right: -13px; top: 16px; height: 2.500px; background: #0696d7; }
.t2 { margin-left: 45px; }
.t3 { margin-left: 48px; }
.t4 { margin-left: 45px; }
.groups { display: flex; height: 52px; }
.grp { display: flex; flex-direction: column; border-right: 1px solid #d6d6d6; flex: none; height: 52px; }
.g1 { width: 263px; padding: 0 4px 0 1px; }
.g2 { width: 270px; padding: 0 5px 0 6px; }
.g3 { width: 96px; padding: 0 4px 0 5px; }
.g4 { width: 59px; padding: 0 12px; }
.g7 { width: 70px; border-right: 0; padding: 0 10px; }
.tools { display: flex; height: 36px; gap: 11px; padding-left: 5px; margin-bottom: 3px; flex: none; }
.g4 .tools { padding-left: 2px; }
.tool { width: 32px; height: 36px; flex: none; }
.selectbox { height: 38px; margin: -1px 0 2px; }
.selic { width: 38px; height: 38px; display: block; }
.glabel { display: flex; align-items: center; justify-content: center; gap: 3px; font-size: 10.500px; color: #333; line-height: 14px; height: 14px; white-space: nowrap; }
.g1 .glabel { padding-right: 10px; }
.g2 .glabel { padding-right: 8px; }
.g3 .glabel { letter-spacing: -.8px; padding-right: 7px; }
.g4 .glabel { padding-right: 2px; }
.g7 .glabel { padding-right: 14px; }

.canvas { position: relative; height: 852px; flex: none; overflow: hidden; background: #fff; }
.scene { display: block; }
.cubet { font-family: "Noto Sans CJK JP", sans-serif; fill: #808080; font-weight: 300; }
.axis { font: bold 13px "Liberation Sans", sans-serif; }
.zaxis { fill: #7a7af0; }
.xaxis { fill: #f08888; }

.panel { position: absolute; left: 4px; width: 300px; height: 25px; background: #f0f0f0; border: 1px solid #cfcfcf; display: flex; align-items: center; padding: 0 2px 0 4px; }
.browser { top: 4px; }
.comments { bottom: 5px; height: 24px; }
.rew { width: 11px; height: 7px; flex: none; }
.ptitle { color: #444; font-size: 10px; margin: 0 0 2px 8px; letter-spacing: -.4px; }
.noarrow { margin-left: 19px; }
.pm { margin-left: auto; display: flex; }
.pmic { width: 10px; height: 10px; }
.grip { width: 3px; height: 12px; margin-left: 6px; border-left: 1px solid #999; border-right: 1px solid #ccc; }

.tree { position: absolute; left: 20px; top: 33px; }
.row { display: flex; align-items: center; height: 24px; padding-left: 20px; gap: 8px; }
.root { padding-left: 1px; gap: 7px; height: 21px; margin-bottom: 2px; }
.corner { width: 12px; height: 12px; }
.rootlab { display: flex; align-items: center; height: 21px; background: rgba(240,240,240,.92); width: 188px; padding-left: 3px; }
.eye { width: 16px; height: 11px; flex: none; margin-left: 1px; }
.eye.off { opacity: .3; }
.rootname { margin-left: 5px; width: 139px; height: 16px; background: #999; display: flex; align-items: center; }
.rootic { width: 18px; height: 16px; margin-left: 1px; flex: none; }
.rname { color: #fff; font-weight: bold; font-size: 11.300px; margin-left: 14px; }
.radio { width: 14px; height: 14px; margin-left: 3px; }
.exp { width: 10px; height: 16px; flex: none; }
.lab { display: flex; align-items: center; height: 21px; background: rgba(240,240,240,.9); padding-left: 3px; }
.w118 { width: 118px; }
.w90 { width: 90px; }
.w91 { width: 91px; }
.w99 { width: 99px; }
.gear { width: 16px; height: 16px; flex: none; }
.fold { width: 17px; height: 13px; flex: none; margin-left: 9px; }
.fold.first { margin-left: 0; }
.ltxt { font-size: 10px; color: #333; white-space: nowrap; letter-spacing: -.4px; margin-bottom: 1px; }
.doc { margin-left: 14px; }
.view { margin-left: 12px; }
.gen { margin-left: 11px; letter-spacing: 1px; }
.bod { margin-left: 11px; }

.navbar { position: absolute; left: 555px; top: 825px; width: 250px; height: 22px; background: rgba(240,240,240,.92); display: flex; align-items: center; gap: 8px; padding-left: 2px; }
.nav { width: 18px; height: 18px; flex: none; }
.navcar { margin: 0 -2px 0 -7px; flex: none; }
.gapl { margin-left: 9px; }

.timeline { flex: 1; background: #f0f0f0; display: flex; flex-direction: column; }
.tlscroll { height: 8px; flex: none; border-top: 2px solid #cacaca; }
.tlthumb { width: 710px; height: 6px; margin-left: 4px; background: #cacaca; border-radius: 0 0 5px 0; }
.tlmain { display: flex; align-items: flex-start; flex: 1; padding-left: 9px; }
.player { width: 116px; height: 18px; margin-top: 13px; flex: none; }
.tltrack { margin-left: 17px; width: 1176px; padding-top: 8px; flex: none; }
.items { list-style: none; margin: 0; padding: 0; display: flex; }
.items li { width: 24px; flex: none; display: flex; flex-direction: column; align-items: center; }
.items svg { width: 18px; height: 18px; display: block; }
.items li::after { content: ""; display: block; width: 2px; height: 6px; margin-top: 1px; background: #cfcfcf; }
.rail { width: 1158px; height: 2.500px; margin-left: 11px; background: #cfcfcf; }
.tlgear { width: 16px; height: 16px; margin: 14px 0 0 11px; flex: none; }
```
